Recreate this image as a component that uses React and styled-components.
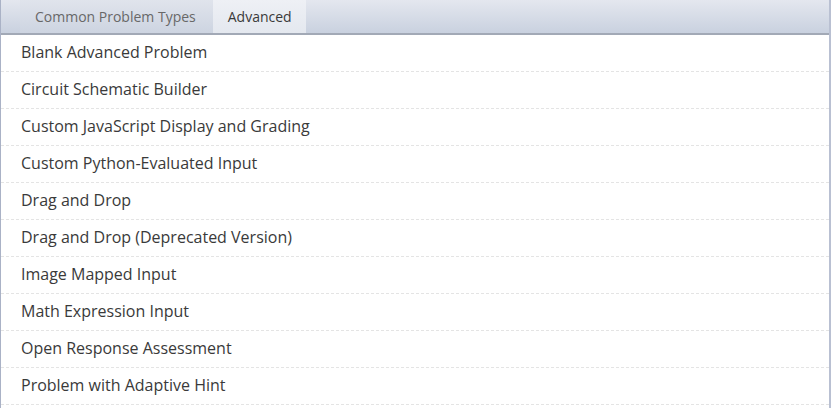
import React from 'react';
import styled, { createGlobalStyle } from 'styled-components';

const Global = createGlobalStyle`
  html, body {
    margin: 0;
    padding: 0;
    background: #fff;
    font-family: "Open Sans", "Liberation Sans", sans-serif;
  }
`;

const Panel = styled.div`
  width: 831px;
  height: 408px;
  box-sizing: border-box;
  border-left: 1px solid #aab2c6;
  border-right: 2px solid #b9c0d2;
  overflow: hidden;
`;

const TabBar = styled.div`
  display: flex;
  height: 33px;
  padding-left: 19px;
  background: linear-gradient(#e4e7ef, #c9d1df);
  border-bottom: 2px solid #a2a9b6;
`;

const Tab = styled.div`
  display: flex;
  align-items: center;
  padding: ${p => (p.$active ? '0 14px 0 15px' : '0 17px 0 15px')};
  font-size: 14px;
  color: ${p => (p.$active ? '#3a3a3a' : '#686868')};
  background: ${p => (p.$active ? 'linear-gradient(#eef0f5, #e4e8ef)' : 'linear-gradient(#e0e4ec, #cdd4e1)')};
`;

const List = styled.ul`
  list-style: none;
  margin: 0;
  padding: 0;
`;

const Item = styled.li`
  height: 36px;
  line-height: 35px;
  padding-left: 20px;
  font-size: 16px;
  color: #3a3a3a;
  border-bottom: 1px dashed #e4e4e4;
`;

const items = [
  'Blank Advanced Problem',
  'Circuit Schematic Builder',
  'Custom JavaScript Display and Grading',
  'Custom Python-Evaluated Input',
  'Drag and Drop',
  'Drag and Drop (Deprecated Version)',
  'Image Mapped Input',
  'Math Expression Input',
  'Open Response Assessment',
  'Problem with Adaptive Hint',
];

export default function App() {
  return (
    <Panel>
      <Global />
      <TabBar>
        <Tab>Common Problem Types</Tab>
        <Tab $active>Advanced</Tab>
      </TabBar>
      <List>
        {items.map(name => (
          <Item key={name}>{name}</Item>
        ))}
      </List>
    </Panel>
  );
}
